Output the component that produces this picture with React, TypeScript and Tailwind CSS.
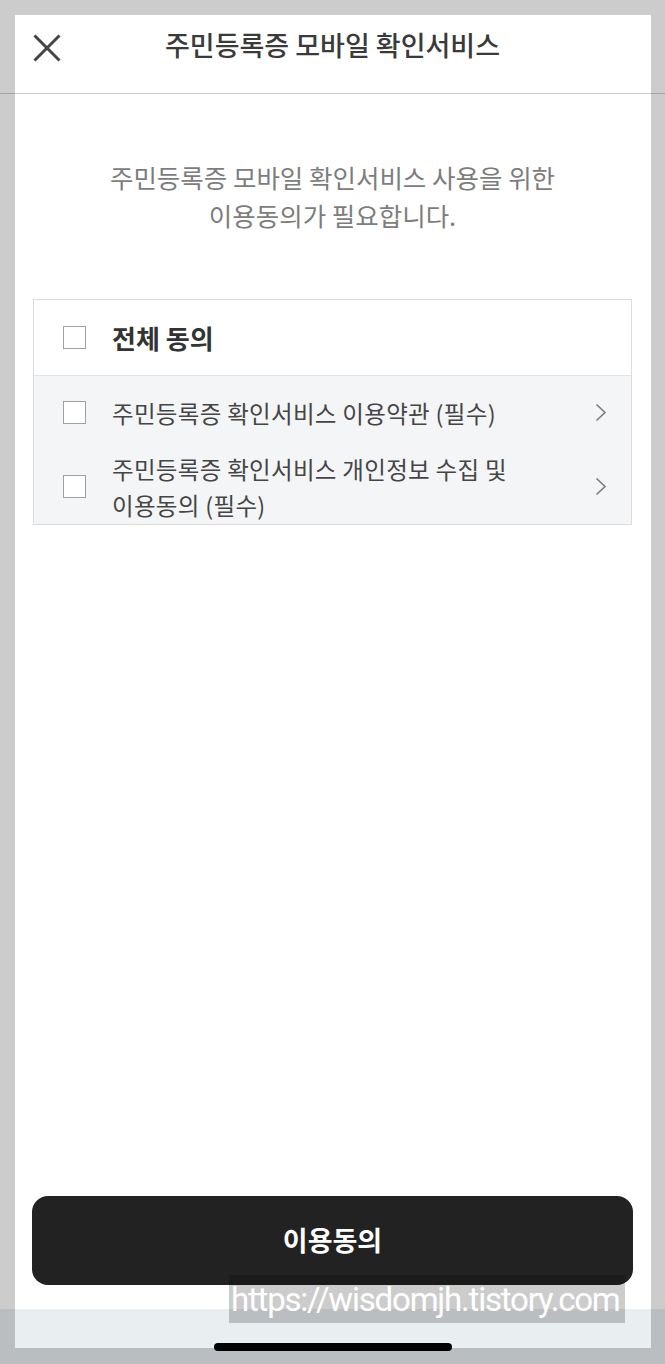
import type { ReactNode } from 'react';

const FONT = { fontFamily: '"Noto Sans CJK KR", "Noto Sans", sans-serif' };

function CheckBox() {
    return <div className="w-[23px] h-[23px] flex-shrink-0 border border-[#a0a0a0] bg-white" />;
}

function Chevron() {
    return (
        <svg width="12" height="19" viewBox="0 0 12 19" className="flex-shrink-0">
            <polyline points="1.5,1.5 10,9.5 1.5,17.5" fill="none" stroke="#7a7a7a" strokeWidth="1.6" />
        </svg>
    );
}

function AgreeRow({ children, height }: { children: ReactNode; height: string }) {
    return (
        <div className={`flex items-center pl-[29px] pr-[24px] ${height}`}>
            <CheckBox />
            <div className="ml-[26px] flex-1 text-[23.5px] leading-[36px] tracking-[0.3px] text-[#454545]">{children}</div>
            <Chevron />
        </div>
    );
}

export default function App() {
    return (
        <div className="relative w-[665px] h-[1364px] overflow-hidden bg-white flex flex-col" style={FONT}>
            {/* Header */}
            <div className="relative h-[94px] flex-shrink-0 border-b border-[#cdcdcd] flex items-center justify-center">
                <svg width="28" height="28" viewBox="0 0 28 28" className="absolute left-[33px] top-[34px]">
                    <line x1="1.5" y1="1.5" x2="26.5" y2="26.5" stroke="#444" strokeWidth="3" />
                    <line x1="26.5" y1="1.5" x2="1.5" y2="26.5" stroke="#444" strokeWidth="3" />
                </svg>
                <h1 className="text-[27px] font-medium text-[#3a3a3a] -mt-[2px]">주민등록증 모바일 확인서비스</h1>
            </div>

            {/* Body */}
            <div className="flex-1 flex flex-col">
                <p className="mt-[64px] text-center text-[25.5px] leading-[38px] text-[#7d7d7d]">
                    주민등록증 모바일 확인서비스 사용을 위한
                    <br />
                    이용동의가 필요합니다.
                </p>

                <div className="mt-[65px] mx-[33px] border border-[#dcdcdc]">
                    <div className="h-[76px] flex items-center pl-[29px] border-b border-[#e2e2e2] bg-white">
                        <CheckBox />
                        <span className="ml-[26px] text-[26px] font-bold text-[#333]">전체 동의</span>
                    </div>
                    <div className="bg-[#f4f5f7]">
                        <AgreeRow height="h-[73px]">주민등록증 확인서비스 이용약관 (필수)</AgreeRow>
                        <AgreeRow height="h-[75px]">
                            주민등록증 확인서비스 개인정보 수집 및
                            <br />
                            이용동의 (필수)
                        </AgreeRow>
                    </div>
                </div>
            </div>

            {/* Bottom button */}
            <div className="px-[32px] pb-[24px] flex-shrink-0">
                <button className="w-full h-[89px] rounded-[16px] bg-[#222222] text-white text-[27px] font-bold">
                    이용동의
                </button>
            </div>

            {/* Home indicator area */}
            <div className="h-[55px] flex-shrink-0 bg-[#e9eef0] flex justify-center pt-[34px]">
                <div className="w-[238px] h-[8px] rounded-full bg-black" />
            </div>

            {/* Watermark */}
            <div className="absolute left-[229px] top-[1275px] w-[396px] h-[48px] bg-black/20 flex items-center overflow-hidden">
                <span
                    className="pl-[2px] text-[33px] leading-none text-white tracking-[-1.2px] whitespace-nowrap"
                    style={{ fontFamily: 'Roboto, "Liberation Sans", sans-serif' }}
                >
                    https://wisdomjh.tistory.com
                </span>
            </div>

            {/* Dimmed frame */}
            <div className="absolute left-0 top-0 w-full h-[15px] bg-black/20" />
            <div className="absolute left-0 top-[15px] w-[15px] h-[1333px] bg-black/20" />
            <div className="absolute right-0 top-[15px] w-[14px] h-[1333px] bg-black/20" />
            <div className="absolute left-0 bottom-0 w-full h-[16px] bg-black/20" />
        </div>
    );
}
